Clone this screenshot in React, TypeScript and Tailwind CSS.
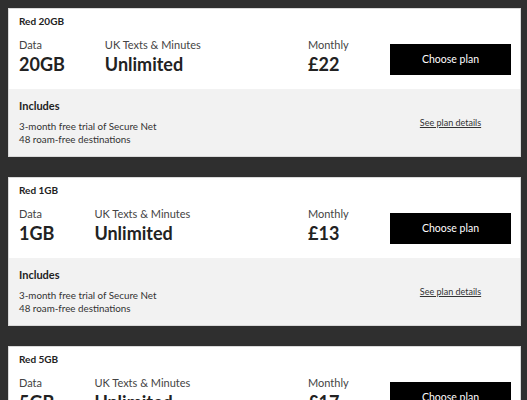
import React from 'react';

type Plan = { name: string; data: string; price: string };

const plans: Plan[] = [
  { name: 'Red 20GB', data: '20GB', price: '£22' },
  { name: 'Red 1GB', data: '1GB', price: '£13' },
  { name: 'Red 5GB', data: '5GB', price: '£17' },
];

const PlanCard: React.FC<{ plan: Plan }> = ({ plan }) => (
  <div className="bg-white border border-[#d9d9d9] shrink-0">
    <div className="h-[80px] pl-[10px] pr-[9px] pt-[5px]">
      <div className="text-[10px] font-bold leading-[14px] text-[#222]">{plan.name}</div>
      <div className="flex items-center mt-[10px]">
        <div className="flex flex-1 gap-[40px]">
          <div>
            <div className="text-[11px] leading-[14px] text-[#444]">Data</div>
            <div className="text-[18px] font-bold leading-[24px] text-[#222]">{plan.data}</div>
          </div>
          <div>
            <div className="text-[11px] leading-[14px] text-[#444]">UK Texts &amp; Minutes</div>
            <div className="text-[18px] font-bold leading-[24px] text-[#222]">Unlimited</div>
          </div>
        </div>
        <div className="w-[82px]">
          <div className="text-[11px] leading-[14px] text-[#444]">Monthly</div>
          <div className="text-[18px] font-bold leading-[24px] text-[#222]">{plan.price}</div>
        </div>
        <button className="mt-[5px] w-[121px] h-[31px] bg-black text-white text-[10.5px]">Choose plan</button>
      </div>
    </div>
    <div className="h-[67px] bg-[#f2f2f2] pl-[10px] pr-[9px] pt-[9px] flex">
      <div className="flex-1">
        <div className="text-[11px] font-bold leading-[16px] text-[#222]">Includes</div>
        <div className="mt-[6px] text-[9.8px] leading-[13px] text-[#333]">
          <div>3-month free trial of Secure Net</div>
          <div>48 roam-free destinations</div>
        </div>
      </div>
      <div className="w-[121px] text-center pt-[10px]">
        <a href="#" className="text-[9px] leading-[13px] text-[#333] underline">See plan details</a>
      </div>
    </div>
  </div>
);

export default function App() {
  return (
    <div
      className="h-[400px] overflow-hidden bg-[#2f2f2f] pl-[8px] pr-[6px] pt-[8px] flex flex-col gap-[20px] w-[527px]"
      style={{ fontFamily: 'Lato, "Liberation Sans", sans-serif' }}
    >
      {plans.map((p) => (
        <PlanCard key={p.name} plan={p} />
      ))}
    </div>
  );
}
